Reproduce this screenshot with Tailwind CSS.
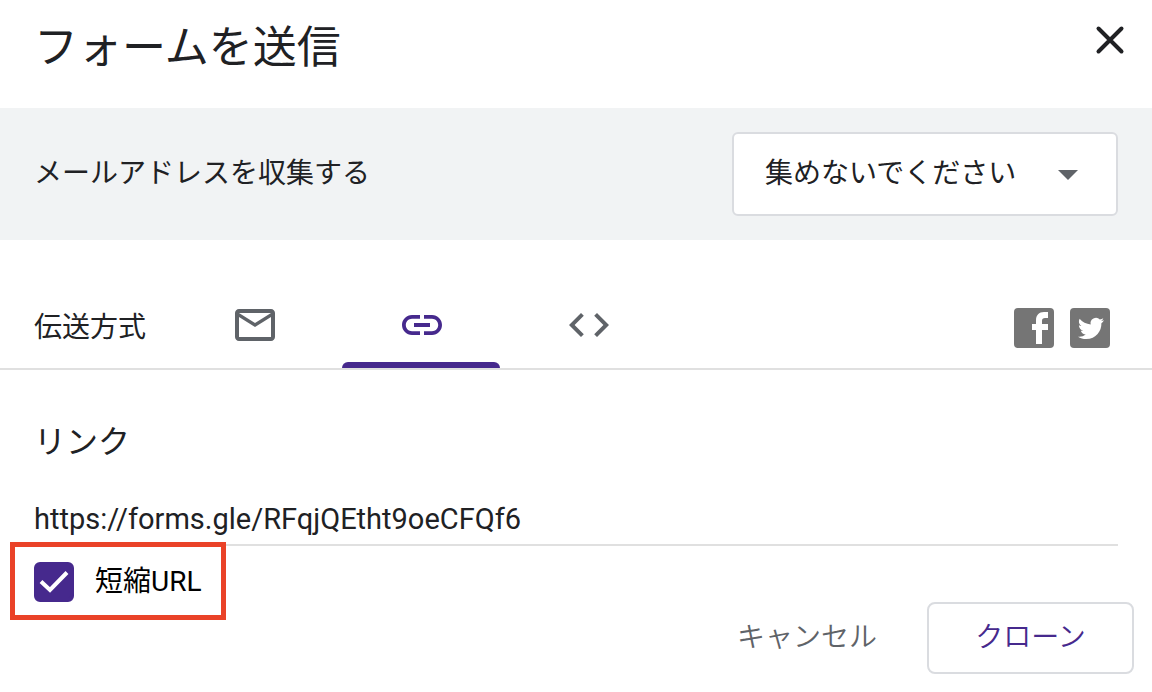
<!DOCTYPE html>
<html lang="ja">
<head>
  <meta charset="UTF-8"/>
  <meta name="viewport" content="width=device-width, initial-scale=1.0"/>
  <title>フォームを送信</title>
  <script src="https://cdn.jsdelivr.net/npm/@tailwindcss/browser@4"></script>
</head>

<body class="bg-white text-[#202124] text-[28px] leading-10 font-[Roboto,'Noto_Sans_CJK_JP',sans-serif]">

<main class="w-full">
  <header class="flex items-start justify-between h-[108px] pl-[34px] pr-[18px] pt-4">
    <h1 class="text-[44px] leading-16">フォームを送信</h1>
    <button type="button" aria-label="閉じる" class="cursor-pointer">
      <svg class="size-12" viewBox="0 0 48 48" fill="none" stroke="currentColor" stroke-width="4" stroke-linecap="round">
        <path d="M12.500 12.500L35.500 35.500M35.500 12.500L12.500 35.500"/>
      </svg>
    </button>
  </header>

  <section class="flex items-center justify-between bg-[#f1f3f4] pl-[34px] pr-[34px] py-6">
    <label for="collect">メールアドレスを収集する</label>
    <div class="relative">
      <select id="collect" class="appearance-none block w-[386px] h-[84px] pl-[31px] pr-20 bg-white border-2 border-[#dadce0] rounded-md cursor-pointer">
        <option>集めないでください</option>
      </select>
      <svg class="absolute right-10 top-[38px] w-5 h-2.5 pointer-events-none" viewBox="0 0 20 10" fill="#5f6368">
        <path d="M0 0h20L10 10z"/>
      </svg>
    </div>
  </section>

  <section class="flex items-end justify-between h-[130px] pl-[34px] pr-[42px] border-b-2 border-[#e0e0e0]">
    <div class="flex items-end">
      <h2 class="w-[141px] pb-5">伝送方式</h2>
      <div class="flex gap-[9px] text-[#5f6368]" role="tablist">
        <button type="button" role="tab" aria-selected="false" aria-label="メール" class="flex justify-center w-[158px] h-[67px] pl-0.5 cursor-pointer">
          <svg class="size-12" viewBox="0 0 24 24" fill="currentColor">
            <path d="M20 4H4c-1.100 0-2 .9-2 2v12c0 1.100.9 2 2 2h16c1.100 0 2-.9 2-2V6c0-1.100-.9-2-2-2zm0 14H4V8l8 5 8-5v10zm-8-7L4 6h16l-8 5z"/>
          </svg>
        </button>
        <button type="button" role="tab" aria-selected="true" aria-label="リンク" class="relative flex justify-center w-[158px] h-[67px] pl-0.5 text-[#46298d] cursor-pointer">
          <svg class="size-12" viewBox="0 0 24 24" fill="currentColor">
            <path d="M7 7h4v1.900H7c-1.710 0-3.100 1.390-3.100 3.100s1.390 3.100 3.100 3.100h4V17H7c-2.760 0-5-2.240-5-5s2.240-5 5-5zM13 7h4c2.760 0 5 2.240 5 5s-2.240 5-5 5h-4v-1.900h4c1.710 0 3.100-1.390 3.100-3.100S18.710 8.900 17 8.900h-4zM8 11h8v2H8z"/>
          </svg>
          <span class="absolute inset-x-0 bottom-0 h-1.5 rounded-t-md bg-[#46298d]"></span>
        </button>
        <button type="button" role="tab" aria-selected="false" aria-label="HTML を埋め込む" class="flex justify-center w-[158px] h-[67px] pl-0.5 cursor-pointer">
          <svg class="size-12" viewBox="0 0 24 24" fill="currentColor">
            <path d="M9.400 16.600L4.800 12l4.600-4.600L8 6l-6 6 6 6 1.400-1.400zm5.200 0l4.600-4.600-4.600-4.600L16 6l6 6-6 6-1.400-1.400z"/>
          </svg>
        </button>
      </div>
    </div>
    <div class="flex gap-4 pb-5">
      <a href="#" aria-label="Facebook">
        <svg class="size-10" viewBox="0 0 40 40">
          <rect width="40" height="40" rx="4" fill="#757575"/>
          <path fill="#fff" d="M22 36V22h-4v-6h4v-3.500C22 7 25 4 30 4h4v6h-3c-2 0-3 .8-3 2.800V16h6v6h-6v14z"/>
        </svg>
      </a>
      <a href="#" aria-label="Twitter">
        <svg class="size-10" viewBox="0 0 40 40">
          <rect width="40" height="40" rx="4" fill="#757575"/>
          <path fill="#fff" d="M34 12.200c-1 .5-2 .8-3 .9 1.100-.7 1.900-1.700 2.300-2.900-1 .6-2.200 1-3.400 1.300A5.400 5.400 0 0 0 20.700 16.400c-4.400-.2-8.400-2.300-11.100-5.600-1.400 2.500-.7 5.600 1.700 7.200-.9 0-1.700-.3-2.400-.7 0 2.600 1.800 4.900 4.300 5.400-.8.2-1.600.2-2.400.1.700 2.100 2.700 3.700 5 3.700A10.800 10.800 0 0 1 8 28.700c2.400 1.500 5.200 2.400 8.200 2.400 9.900 0 15.500-8.400 15.200-15.900 1-.8 1.900-1.800 2.600-3z"/>
        </svg>
      </a>
    </div>
  </section>

  <section class="px-[34px] pt-[52px]">
    <label for="url" class="block text-[32px]">リンク</label>
    <input id="url" type="text" readonly value="https://forms.gle/RFqjQEtht9oeCFQf6"
           class="block w-full h-[56px] mt-7 pt-1 text-[29px] border-b-2 border-[#e0e0e0] outline-none">
  </section>

  <section class="flex items-start justify-between pl-[10px] pr-[18px]">
    <!-- marco rojo alrededor de la casilla -->
    <label for="short" class="relative -mt-1 flex items-center gap-[21px] w-[216px] h-[78px] pl-[19px] pt-0.5 border-5 border-[#ea4228] text-black cursor-pointer">
      <span class="grid size-10">
        <input id="short" type="checkbox" checked class="peer appearance-none col-start-1 row-start-1 size-10 rounded-md border-4 border-[#5f6368] checked:border-[#46298d] checked:bg-[#46298d]">
        <svg class="hidden peer-checked:block col-start-1 row-start-1 size-10 pointer-events-none" viewBox="0 0 40 40" fill="none" stroke="#fff" stroke-width="4">
          <path d="M7 19.500L16 28L33 10.500"/>
        </svg>
      </span>
      <span>短縮URL</span>
    </label>
    <div class="flex gap-[18px] mt-14">
      <button type="button" class="h-[72px] px-8 text-[#5f6368] font-[350] cursor-pointer">キャンセル</button>
      <button type="button" class="w-[207px] h-[72px] border-2 border-[#dadce0] rounded-lg text-[#46298d] font-[350] cursor-pointer">クローン</button>
    </div>
  </section>
</main>

</body>
</html>
